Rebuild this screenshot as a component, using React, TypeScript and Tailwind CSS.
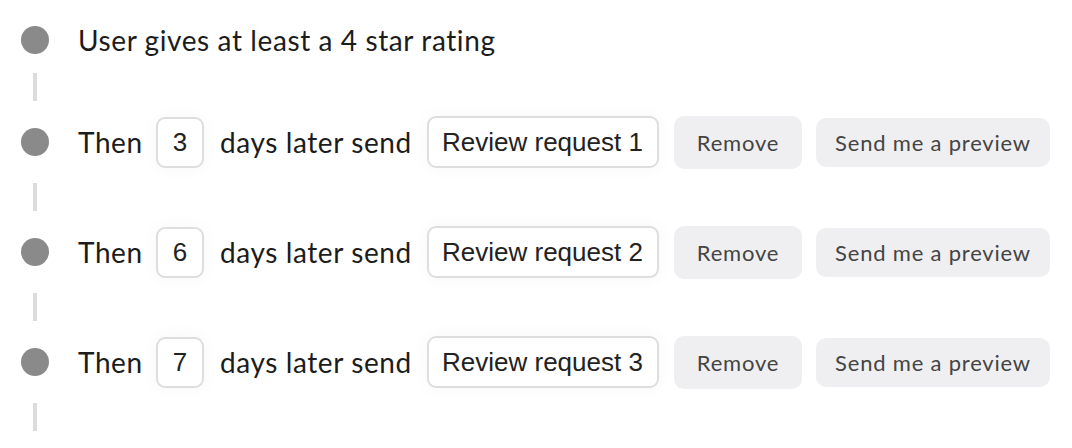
import React from "react";

const label = "font-['Lato','Noto_Sans',sans-serif] text-[28px] tracking-[0.6px] text-[#1c1c1c] leading-[36px]";

function Line() {
  return <div className="ml-[12px] my-[15px] h-[28px] w-[4px] bg-[#dcdcdc]" />;
}

function Dot() {
  return <div className="h-[28px] w-[28px] shrink-0 rounded-full bg-[#8a8a8a]" />;
}

function Step({ days, name }: { days: number; name: string }) {
  return (
    <div className="flex h-[52px] items-center">
      <Dot />
      <div className="ml-[29px] flex items-center gap-[16px]">
        <span className={`w-[62px] ${label}`}>Then</span>
        <div className="flex h-[51px] w-[48px] items-center justify-center rounded-[9px] border-2 border-[#dedede] bg-white shadow-[0_0_18px_rgba(0,0,0,0.04)] font-['Liberation_Sans',sans-serif] text-[26px] text-[#222]">
          {days}
        </div>
        <span className={`w-[191px] whitespace-nowrap ${label}`}>days later send</span>
        <div className="flex h-[52px] w-[232px] items-center rounded-[9px] border-2 border-[#dedede] bg-white pl-[13px] shadow-[0_0_18px_rgba(0,0,0,0.04)] font-['Liberation_Sans',sans-serif] text-[26px] text-[#222]">
          {name}
        </div>
        <button className="ml-[-1px] flex h-[53px] w-[128px] items-center justify-center rounded-[10px] bg-[#efeff1] font-['Lato',sans-serif] text-[22px] tracking-[0.8px] text-[#444]">
          Remove
        </button>
        <button className="ml-[-2px] flex h-[49px] w-[234px] items-center justify-center rounded-[10px] bg-[#efeff1] font-['Lato',sans-serif] text-[22px] tracking-[0.8px] text-[#444]">
          Send me a preview
        </button>
      </div>
    </div>
  );
}

export default function App() {
  return (
    <div className="h-[448px] w-[1072px] overflow-hidden bg-white pl-[21px] pt-[22px]">
      <div className="flex h-[36px] items-center">
        <Dot />
        <span className={`ml-[29px] ${label}`}>User gives at least a 4 star rating</span>
      </div>
      <Line />
      <Step days={3} name="Review request 1" />
      <Line />
      <Step days={6} name="Review request 2" />
      <Line />
      <Step days={7} name="Review request 3" />
      <Line />
    </div>
  );
}
